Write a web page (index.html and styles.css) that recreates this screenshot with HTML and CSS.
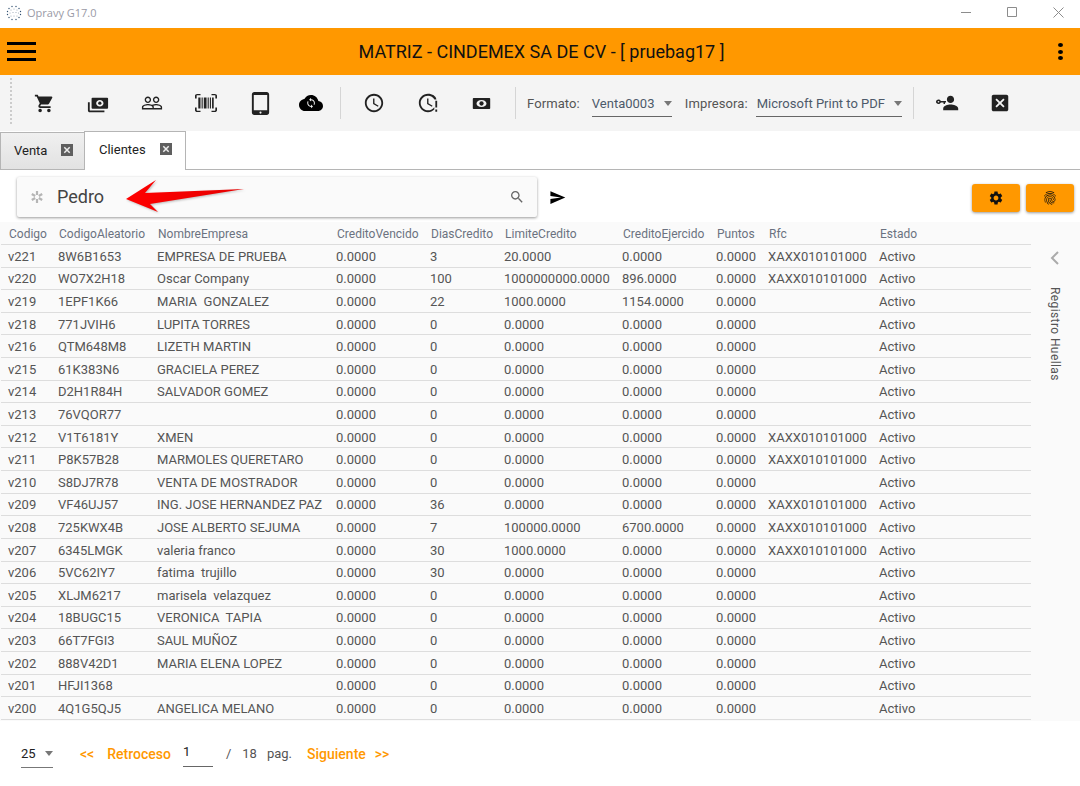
FILE: index.html
```html
<!DOCTYPE html>
<html lang="es">
<head>
<meta charset="utf-8">
<title>Opravy G17.0</title>
<link rel="stylesheet" href="styles.css">
</head>
<body>
<div class="app">
  <header class="titlebar">
    <svg class="logo" viewBox="0 0 16 16"><g class="logo-a"><circle cx="6" cy="1.500" r=".7"/><circle cx="10" cy="1.500" r=".7"/><circle cx="3" cy="3.500" r=".7"/><circle cx="13" cy="3.500" r=".7"/><circle cx="1.500" cy="6.500" r=".7"/><circle cx="14.500" cy="6.500" r=".7"/><circle cx="1.500" cy="9.500" r=".7"/><circle cx="14.500" cy="9.500" r=".7"/><circle cx="3" cy="12.500" r=".7"/><circle cx="13" cy="12.500" r=".7"/><circle cx="6" cy="14.500" r=".7"/><circle cx="10" cy="14.500" r=".7"/></g><g class="logo-b"><circle cx="5" cy="5" r=".6"/><circle cx="8" cy="4" r=".6"/><circle cx="11" cy="5" r=".6"/><circle cx="4" cy="8" r=".6"/><circle cx="7" cy="7.500" r=".6"/><circle cx="10" cy="7.500" r=".6"/><circle cx="12.500" cy="8" r=".6"/><circle cx="5" cy="11" r=".6"/><circle cx="8" cy="11" r=".6"/><circle cx="11" cy="11" r=".6"/></g></svg>
    <span class="app-name">Opravy G17.0</span>
    <div class="win-controls">
      <svg class="win-btn" viewBox="0 0 11 11"><path d="M0 5.500h10"/></svg>
      <svg class="win-btn" viewBox="0 0 11 11"><path d="M.5.5h9v9h-9z"/></svg>
      <svg class="win-btn" viewBox="0 0 11 11"><path d="M.5.5l10 10M10.500.5l-10 10"/></svg>
    </div>
  </header>

  <div class="appbar">
    <div class="burger"><span></span><span></span><span></span></div>
    <h1 class="appbar-title">MATRIZ - CINDEMEX SA DE CV - [ pruebag17 ]</h1>
    <div class="kebab"><span></span><span></span><span></span></div>
  </div>

  <div class="toolbar">
    <div class="grip"></div>
    <div class="tool tool-cart"><svg viewBox="0 0 24 24"><path d="M7 18c-1.100 0-1.990.9-1.990 2S5.900 22 7 22s2-.9 2-2-.9-2-2-2zM1 2v2h2l3.600 7.590-1.350 2.450c-.16.28-.25.61-.25.96 0 1.100.9 2 2 2h12v-2H7.420c-.14 0-.25-.11-.25-.25l.03-.12.9-1.630h7.450c.75 0 1.410-.41 1.750-1.030l3.580-6.490c.08-.14.12-.31.12-.48 0-.55-.45-1-1-1H5.210l-.94-2H1zm16 16c-1.100 0-1.990.9-1.990 2s.89 2 1.990 2 2-.9 2-2-.9-2-2-2z"/></svg></div>
    <div class="tool tool-money"><svg viewBox="0 0 24 24"><path fill-rule="evenodd" d="M6 4h16c.6 0 1 .4 1 1v10c0 .6-.4 1-1 1H6c-.6 0-1-.4-1-1V5c0-.6.4-1 1-1zm8 2.500c-2.200 0-4 1.600-4 3.500s1.800 3.500 4 3.500 4-1.600 4-3.500-1.800-3.500-4-3.500z"/><circle cx="14" cy="10" r="1.800"/><path d="M1 9h2v9h16v2H3c-1.100 0-2-.9-2-2z"/></svg></div>
    <div class="tool tool-people"><svg viewBox="0 0 24 24"><path d="M16.500 13c-1.200 0-3.070.34-4.500 1-1.430-.67-3.300-1-4.500-1C5.330 13 1 14.080 1 16.250V19h22v-2.750c0-2.170-4.330-3.250-6.500-3.250zm-4 4.500h-10v-1.250c0-.54 2.560-1.750 5-1.750s5 1.210 5 1.750v1.250zm9 0H14v-1.250c0-.46-.2-.86-.52-1.220.88-.3 1.960-.53 3.020-.53 2.440 0 5 1.210 5 1.750v1.250zM7.500 12c1.930 0 3.500-1.570 3.500-3.500S9.430 5 7.500 5 4 6.570 4 8.500 5.570 12 7.500 12zm0-5.500c1.100 0 2 .9 2 2s-.9 2-2 2-2-.9-2-2 .9-2 2-2zm9 5.500c1.930 0 3.500-1.570 3.500-3.500S18.430 5 16.500 5 13 6.570 13 8.500s1.570 3.500 3.500 3.500zm0-5.500c1.100 0 2 .9 2 2s-.9 2-2 2-2-.9-2-2 .9-2 2-2z"/></svg></div>
    <div class="tool tool-barcode"><svg viewBox="2 2 20 20" preserveAspectRatio="none"><path d="M2 7V4c0-1.100.9-2 2-2h3v1.500H4c-.3 0-.5.2-.5.5v3zM17 2h3c1.100 0 2 .9 2 2v3h-1.500V4c0-.3-.2-.5-.5-.5h-3zM2 17h1.500v3c0 .3.2.5.5.5h3V22H4c-1.100 0-2-.9-2-2zM20.500 17H22v3c0 1.100-.9 2-2 2h-3v-1.500h3c.3 0 .5-.2.5-.5z"/><path d="M5 6h2v12H5zM8 6h1v12H8zM10 6h2.500v12H10zM13.500 6h1v12h-1zM15.500 6h1v12h-1zM17.500 6H19v12h-1.500z"/></svg></div>
    <div class="tool tool-tablet"><svg viewBox="0 0 24 24"><path d="M18.500 0h-13C4.100 0 3 1.100 3 2.500v19C3 22.900 4.100 24 5.500 24h13c1.400 0 2.500-1.100 2.500-2.500v-19C21 1.100 19.900 0 18.500 0zM19 19H5V3h14z"/><circle class="ink-white" cx="12" cy="21.500" r="1.100"/></svg></div>
    <div class="tool tool-cloud"><svg viewBox="0 0 24 24"><path d="M19.350 10.040C18.670 6.590 15.640 4 12 4 9.110 4 6.600 5.640 5.350 8.040 2.340 8.360 0 10.910 0 14c0 3.310 2.690 6 6 6h13c2.760 0 5-2.240 5-5 0-2.640-2.050-4.780-4.650-4.960z"/><path class="ink-white" transform="translate(6.300 6.300) scale(.48)" d="M12 4V1L8 5l4 4V6c3.310 0 6 2.690 6 6 0 1.010-.25 1.970-.7 2.800l1.460 1.460C19.540 15.030 20 13.570 20 12c0-4.420-3.580-8-8-8zm0 14c-3.310 0-6-2.690-6-6 0-1.010.25-1.970.7-2.800L5.240 7.740C4.460 8.970 4 10.430 4 12c0 4.420 3.580 8 8 8v3l4-4-4-4v3z"/></svg></div>
    <div class="vsep sep-a"></div>
    <div class="tool tool-clock"><svg viewBox="0 0 24 24"><path d="M11.990 2C6.470 2 2 6.480 2 12s4.470 10 9.990 10C17.520 22 22 17.520 22 12S17.520 2 11.990 2zM12 20c-4.420 0-8-3.580-8-8s3.580-8 8-8 8 3.580 8 8-3.580 8-8 8zm.5-13H11v6l5.250 3.150.75-1.230-4.500-2.670z"/></svg></div>
    <div class="tool tool-clock"><svg viewBox="0 0 24 24"><path d="M11.990 2C6.470 2 2 6.480 2 12s4.470 10 9.990 10c2.700 0 5.100-1.050 6.900-2.800V16.500c-1.500 2.150-4 3.500-6.890 3.500-4.420 0-8-3.580-8-8s3.580-8 8-8c3 0 5.700 1.700 7 4.200h2.200C20.700 4.500 16.700 2 11.990 2z"/><path d="M12.500 7H11v6l5.250 3.150.75-1.230-4.500-2.670zM20 9.500h2V17h-2zM20 19h2v2.500h-2z"/></svg></div>
    <div class="tool tool-cash"><svg viewBox="0 0 24 24"><path fill-rule="evenodd" d="M2 5h20c.6 0 1 .4 1 1v12c0 .6-.4 1-1 1H2c-.6 0-1-.4-1-1V6c0-.6.4-1 1-1zm10 2.500C8.500 7.500 5.700 9.500 5.700 12s2.800 4.500 6.300 4.500 6.300-2 6.300-4.500-2.800-4.500-6.300-4.500z"/><circle cx="12" cy="12" r="2.700"/></svg></div>
    <div class="vsep sep-b"></div>
    <span class="field-label">Formato:</span>
    <div class="select select-formato"><span class="select-value">Venta0003</span><i class="caret"></i></div>
    <span class="field-label label-impresora">Impresora:</span>
    <div class="select select-impresora"><span class="select-value">Microsoft Print to PDF</span><i class="caret"></i></div>
    <div class="vsep sep-c"></div>
    <div class="tool tool-key"><svg viewBox="0 0 24 24"><path d="M15.500 12c2 0 3.600-1.600 3.600-3.600S17.500 4.800 15.500 4.800s-3.600 1.600-3.600 3.600 1.600 3.600 3.600 3.600zM15.500 13.600c-2.700 0-7.300 1.300-7.300 4v1.600h15v-1.600c0-2.700-5-4-7.700-4z"/><path fill-rule="evenodd" d="M3.500 8.500c1.100 0 2 .6 2.400 1.500h5.100v1.500H10V13H8.500v-1.500H5.900c-.4.900-1.300 1.500-2.400 1.500-1.400 0-2.500-1-2.500-2.250S2.100 8.500 3.500 8.500zm0 1.500c-.5 0-.9.300-.9.750s.4.750.9.750.9-.3.900-.75-.4-.75-.9-.75z"/></svg></div>
    <div class="tool tool-x"><svg viewBox="0 0 24 24"><path d="M19 3H5c-1.110 0-2 .9-2 2v14c0 1.100.89 2 2 2h14c1.110 0 2-.9 2-2V5c0-1.100-.89-2-2-2zm-2 12.590L15.590 17 12 13.410 8.410 17 7 15.590 10.590 12 7 8.410 8.410 7 12 10.590 15.590 7 17 8.410 13.410 12 17 15.590z"/></svg></div>
  </div>

  <nav class="tabs">
    <div class="tab tab-off"><span>Venta</span><svg class="tab-x" viewBox="0 0 12 12"><path class="tab-x-bg" d="M0 0h12v12H0z"/><path class="tab-x-fg" d="M3.300 3.300l5.400 5.400M8.700 3.300L3.300 8.700"/></svg></div>
    <div class="tab tab-on"><span>Clientes</span><svg class="tab-x" viewBox="0 0 12 12"><path class="tab-x-bg" d="M0 0h12v12H0z"/><path class="tab-x-fg" d="M3.300 3.300l5.400 5.400M8.700 3.300L3.300 8.700"/></svg></div>
  </nav>

  <div class="searchrow">
    <div class="searchbox">
      <svg class="spinner" viewBox="0 0 14 14"><path d="M7 1v4M7 9v4M1.800 4l3.400 2M8.800 8l3.400 2M1.800 10l3.400-2M8.800 6l3.400-2"/></svg>
      <span class="search-text">Pedro</span>
      <svg class="search-icon" viewBox="0 0 24 24"><path d="M15.500 14h-.79l-.28-.27C15.410 12.590 16 11.110 16 9.500 16 5.910 13.090 3 9.500 3S3 5.910 3 9.500 5.910 16 9.500 16c1.610 0 3.090-.59 4.230-1.570l.27.28v.79l5 4.990L20.490 19l-4.990-5zm-6 0C7.010 14 5 11.990 5 9.500S7.010 5 9.500 5 14 7.010 14 9.500 11.990 14 9.500 14z"/></svg>
    </div>
    <svg class="send" viewBox="0 0 24 24"><path d="M2.010 21L23 12 2.010 3 2 10l15 2-15 2z"/></svg>
    <div class="search-actions">
      <div class="orange-btn"><svg viewBox="0 0 24 24"><path d="M19.140 12.940c.04-.3.06-.61.06-.94 0-.32-.02-.64-.07-.94l2.030-1.580c.18-.14.23-.41.12-.61l-1.920-3.320c-.12-.22-.37-.29-.59-.22l-2.390.96c-.5-.38-1.030-.7-1.620-.94l-.36-2.540c-.04-.24-.24-.41-.48-.41h-3.840c-.24 0-.43.17-.47.41l-.36 2.540c-.59.24-1.130.57-1.620.94l-2.390-.96c-.22-.08-.47 0-.59.22L2.740 8.870c-.12.21-.08.47.12.61l2.030 1.580c-.05.3-.09.63-.09.94s.02.64.07.94l-2.030 1.580c-.18.14-.23.41-.12.61l1.920 3.320c.12.22.37.29.59.22l2.390-.96c.5.38 1.030.7 1.620.94l.36 2.540c.05.24.24.41.48.41h3.840c.24 0 .44-.17.47-.41l.36-2.540c.59-.24 1.130-.56 1.620-.94l2.390.96c.22.08.47 0 .59-.22l1.920-3.320c.12-.22.07-.47-.12-.61l-2.010-1.580zM12 15.600c-1.980 0-3.600-1.620-3.600-3.600s1.620-3.600 3.600-3.600 3.600 1.620 3.600 3.600-1.620 3.600-3.600 3.600z"/></svg></div>
      <div class="orange-btn"><svg viewBox="0 0 24 24"><path d="M17.810 4.470c-.08 0-.16-.02-.23-.06C15.660 3.420 14 3 12.010 3c-1.980 0-3.860.47-5.570 1.410-.24.13-.54.04-.68-.2-.13-.24-.04-.55.2-.68C7.820 2.520 9.860 2 12.010 2c2.130 0 3.990.47 6.030 1.520.25.13.34.43.21.67-.09.18-.26.28-.44.28zM3.500 9.720c-.1 0-.2-.03-.29-.09-.23-.16-.28-.47-.12-.7.99-1.400 2.250-2.500 3.750-3.270C9.980 4.040 14 4.030 17.150 5.650c1.500.77 2.760 1.860 3.750 3.250.16.22.11.54-.12.7-.23.16-.54.11-.7-.12-.9-1.260-2.040-2.250-3.390-2.940-2.870-1.470-6.540-1.470-9.400.01-1.360.7-2.500 1.700-3.400 2.960-.08.14-.23.21-.39.21zm6.250 12.070c-.13 0-.26-.05-.35-.15-.87-.87-1.340-1.430-2.010-2.640-.69-1.230-1.050-2.730-1.050-4.340 0-2.970 2.540-5.390 5.660-5.390s5.660 2.420 5.660 5.390c0 .28-.22.5-.5.5s-.5-.22-.5-.5c0-2.420-2.090-4.390-4.660-4.390-2.570 0-4.660 1.970-4.660 4.390 0 1.440.32 2.770.93 3.850.64 1.150 1.080 1.640 1.850 2.420.19.2.19.51 0 .71-.11.1-.24.15-.37.15zm7.170-1.850c-1.190 0-2.240-.3-3.100-.89-1.490-1.010-2.380-2.650-2.380-4.390 0-.28.22-.5.5-.5s.5.22.5.5c0 1.410.72 2.740 1.940 3.560.71.48 1.540.71 2.540.71.24 0 .64-.03 1.040-.1.27-.05.53.13.58.41.05.27-.13.53-.41.58-.57.11-1.070.12-1.210.12zM14.910 22c-.04 0-.09-.01-.13-.02-1.590-.44-2.630-1.030-3.720-2.100-1.400-1.390-2.170-3.240-2.170-5.220 0-1.620 1.380-2.940 3.080-2.940 1.700 0 3.080 1.320 3.080 2.940 0 1.070.93 1.940 2.080 1.940s2.080-.87 2.080-1.940c0-3.770-3.250-6.830-7.250-6.830-2.840 0-5.440 1.580-6.610 4.030-.39.81-.59 1.760-.59 2.800 0 .78.07 2.010.67 3.610.1.26-.03.55-.29.64-.26.1-.55-.04-.64-.29-.49-1.310-.73-2.610-.73-3.960 0-1.200.23-2.290.68-3.240 1.330-2.790 4.280-4.600 7.510-4.600 4.550 0 8.250 3.510 8.250 7.830 0 1.620-1.380 2.940-3.080 2.940s-3.080-1.320-3.080-2.940c0-1.070-.93-1.940-2.080-1.940s-2.080.87-2.080 1.940c0 1.710.66 3.310 1.870 4.510.95.94 1.860 1.460 3.270 1.850.27.07.42.35.35.61-.05.23-.26.38-.47.38z"/></svg></div>
    </div>
    <svg class="red-arrow" viewBox="0 0 130 36"><defs><linearGradient id="arrowfill" x1="0" y1="0" x2="1" y2="0"><stop offset="0" stop-color="#f00"/><stop offset="1" stop-color="#e60000"/></linearGradient></defs><polygon fill="url(#arrowfill)" points="2,19 32,0 21,13 120,9 26,24 34,32"/></svg>
  </div>

  <div class="content">
    <table class="grid">
      <colgroup><col class="c1"><col class="c2"><col class="c3"><col class="c4"><col class="c5"><col class="c6"><col class="c7"><col class="c8"><col class="c9"><col></colgroup>
      <thead><tr><th>Codigo</th><th>CodigoAleatorio</th><th>NombreEmpresa</th><th>CreditoVencido</th><th>DiasCredito</th><th>LimiteCredito</th><th>CreditoEjercido</th><th>Puntos</th><th>Rfc</th><th>Estado</th></tr></thead>
      <tbody>
        <tr><td>v221</td><td>8W6B1653</td><td>EMPRESA DE PRUEBA</td><td>0.0000</td><td>3</td><td>20.0000</td><td>0.0000</td><td>0.0000</td><td>XAXX010101000</td><td>Activo</td></tr>
        <tr><td>v220</td><td>WO7X2H18</td><td>Oscar Company</td><td>0.0000</td><td>100</td><td>1000000000.0000</td><td>896.0000</td><td>0.0000</td><td>XAXX010101000</td><td>Activo</td></tr>
        <tr><td>v219</td><td>1EPF1K66</td><td>MARIA&nbsp; GONZALEZ</td><td>0.0000</td><td>22</td><td>1000.0000</td><td>1154.0000</td><td>0.0000</td><td></td><td>Activo</td></tr>
        <tr><td>v218</td><td>771JVIH6</td><td>LUPITA TORRES</td><td>0.0000</td><td>0</td><td>0.0000</td><td>0.0000</td><td>0.0000</td><td></td><td>Activo</td></tr>
        <tr><td>v216</td><td>QTM648M8</td><td>LIZETH MARTIN</td><td>0.0000</td><td>0</td><td>0.0000</td><td>0.0000</td><td>0.0000</td><td></td><td>Activo</td></tr>
        <tr><td>v215</td><td>61K383N6</td><td>GRACIELA PEREZ</td><td>0.0000</td><td>0</td><td>0.0000</td><td>0.0000</td><td>0.0000</td><td></td><td>Activo</td></tr>
        <tr><td>v214</td><td>D2H1R84H</td><td>SALVADOR GOMEZ</td><td>0.0000</td><td>0</td><td>0.0000</td><td>0.0000</td><td>0.0000</td><td></td><td>Activo</td></tr>
        <tr><td>v213</td><td>76VQOR77</td><td></td><td>0.0000</td><td>0</td><td>0.0000</td><td>0.0000</td><td>0.0000</td><td></td><td>Activo</td></tr>
        <tr><td>v212</td><td>V1T6181Y</td><td>XMEN</td><td>0.0000</td><td>0</td><td>0.0000</td><td>0.0000</td><td>0.0000</td><td>XAXX010101000</td><td>Activo</td></tr>
        <tr><td>v211</td><td>P8K57B28</td><td>MARMOLES QUERETARO</td><td>0.0000</td><td>0</td><td>0.0000</td><td>0.0000</td><td>0.0000</td><td>XAXX010101000</td><td>Activo</td></tr>
        <tr><td>v210</td><td>S8DJ7R78</td><td>VENTA DE MOSTRADOR</td><td>0.0000</td><td>0</td><td>0.0000</td><td>0.0000</td><td>0.0000</td><td></td><td>Activo</td></tr>
        <tr><td>v209</td><td>VF46UJ57</td><td>ING. JOSE HERNANDEZ PAZ</td><td>0.0000</td><td>36</td><td>0.0000</td><td>0.0000</td><td>0.0000</td><td>XAXX010101000</td><td>Activo</td></tr>
        <tr><td>v208</td><td>725KWX4B</td><td>JOSE ALBERTO SEJUMA</td><td>0.0000</td><td>7</td><td>100000.0000</td><td>6700.0000</td><td>0.0000</td><td>XAXX010101000</td><td>Activo</td></tr>
        <tr><td>v207</td><td>6345LMGK</td><td>valeria franco</td><td>0.0000</td><td>30</td><td>1000.0000</td><td>0.0000</td><td>0.0000</td><td>XAXX010101000</td><td>Activo</td></tr>
        <tr><td>v206</td><td>5VC62IY7</td><td>fatima&nbsp; trujillo</td><td>0.0000</td><td>30</td><td>0.0000</td><td>0.0000</td><td>0.0000</td><td></td><td>Activo</td></tr>
        <tr><td>v205</td><td>XLJM6217</td><td>marisela&nbsp; velazquez</td><td>0.0000</td><td>0</td><td>0.0000</td><td>0.0000</td><td>0.0000</td><td></td><td>Activo</td></tr>
        <tr><td>v204</td><td>18BUGC15</td><td>VERONICA&nbsp; TAPIA</td><td>0.0000</td><td>0</td><td>0.0000</td><td>0.0000</td><td>0.0000</td><td></td><td>Activo</td></tr>
        <tr><td>v203</td><td>66T7FGI3</td><td>SAUL MUÑOZ</td><td>0.0000</td><td>0</td><td>0.0000</td><td>0.0000</td><td>0.0000</td><td></td><td>Activo</td></tr>
        <tr><td>v202</td><td>888V42D1</td><td>MARIA ELENA LOPEZ</td><td>0.0000</td><td>0</td><td>0.0000</td><td>0.0000</td><td>0.0000</td><td></td><td>Activo</td></tr>
        <tr><td>v201</td><td>HFJI1368</td><td></td><td>0.0000</td><td>0</td><td>0.0000</td><td>0.0000</td><td>0.0000</td><td></td><td>Activo</td></tr>
        <tr><td>v200</td><td>4Q1G5QJ5</td><td>ANGELICA MELANO</td><td>0.0000</td><td>0</td><td>0.0000</td><td>0.0000</td><td>0.0000</td><td></td><td>Activo</td></tr>
      </tbody>
    </table>
    <aside class="sidepanel">
      <svg class="chevron" viewBox="0 0 12 16"><path d="M9 2L3 8l6 6"/></svg>
      <span class="side-text">Registro Huellas</span>
    </aside>
  </div>

  <footer class="pager">
    <div class="page-size"><span>25</span><i class="caret"></i></div>
    <span class="pg-link pg-prev-arrows">&lt;&lt;</span>
    <span class="pg-link pg-prev">Retroceso</span>
    <div class="pg-input">1</div>
    <span class="pg-text pg-slash">/</span>
    <span class="pg-text pg-total">18</span>
    <span class="pg-text pg-unit">pag.</span>
    <span class="pg-link pg-next">Siguiente</span>
    <span class="pg-link pg-next-arrows">&gt;&gt;</span>
  </footer>
</div>
</body>
</html>
```
FILE: styles.css
```css
* { box-sizing: border-box; }
html, body { margin: 0; padding: 0; }
body { width: 1080px; height: 786px; overflow: hidden; background: #fff; font-family: Roboto, "Liberation Sans", sans-serif; }
.app { display: flex; flex-direction: column; width: 1080px; height: 786px; }

/* title bar */
.titlebar { height: 28px; flex: none; display: flex; align-items: center; padding: 0 0 3px 6px; background: #fff; }
.logo { width: 16px; height: 16px; margin-right: 5px; }
.logo-a { fill: #2f4f70; }
.logo-b { fill: #9aa8b5; }
.app-name { font: 11px "Open Sans", sans-serif; color: #9a9aa6; }
.win-controls { margin-left: auto; display: flex; padding-right: 16px; gap: 35px; }
.win-btn { width: 11px; height: 11px; fill: none; stroke: #8c8c8c; stroke-width: 1; overflow: visible; }

/* app bar */
.appbar { height: 47px; flex: none; background: #ff9800; display: flex; align-items: center; padding: 0 17px 0 7px; }
.burger { width: 29px; display: flex; flex-direction: column; gap: 5px; }
.burger span { display: block; height: 3px; background: #000; }
.appbar-title { flex: 1; margin: 0 0 0 -11px; text-align: center; font: 400 18px Roboto, sans-serif; color: #111; }
.kebab { width: 5px; display: flex; flex-direction: column; gap: 2.500px; }
.kebab span { width: 5px; height: 4px; border-radius: 50%; background: #000; }

/* toolbar */
.toolbar { height: 56px; flex: none; background: #f4f4f4; display: flex; align-items: center; padding-left: 10px; }
.grip { width: 2px; height: 46px; border-left: 2px dotted #ccc; margin-right: 5px; margin-top: -4px; }
.tool { width: 54px; display: flex; justify-content: center; align-items: center; }
.tool svg { width: 24px; height: 24px; fill: #222; }
.tool-cart svg { width: 21px; height: 21px; }
.tool-money svg { width: 22px; height: 22px; margin-top: 3px; }
.tool-people svg { width: 22px; height: 22px; }
.tool-barcode svg { width: 22px; height: 18px; }
.tool-tablet svg { width: 23px; height: 23px; }
.tool-cloud { width: 48px; }
.tool-cloud svg { fill: #000; }
.ink-white { fill: #f4f4f4; }
.vsep { width: 1px; height: 32px; background: #d5d5d5; flex: none; }
.sep-a { margin: 0 6px 0 5px; }
.tool-clock svg { width: 22px; height: 22px; }
.tool-cash { width: 53px; }
.tool-cash svg { width: 19px; height: 19px; }
.sep-b { margin-left: 7px; }
.field-label { font-size: 13px; color: #555; margin-left: 11px; letter-spacing: .1px; }
.label-impresora { margin-left: 13px; }
.select { display: flex; align-items: center; height: 26px; margin-top: 1px; margin-left: 12px; border-bottom: 1px solid #666; font-size: 13px; color: #4d5a6a; padding-top: 1px; }
.select-formato { width: 80px; }
.select-impresora { width: 146px; margin-left: 8px; padding-left: 1px; }
.select-value { flex: 1; }
.caret { width: 0; height: 0; border-left: 4.500px solid transparent; border-right: 4.500px solid transparent; border-top: 5px solid #777; }
.sep-c { margin-left: 11px; }
.tool-key { width: 66px; }
.tool-x { width: 40px; }
.tool-x svg { width: 22px; height: 22px; }

/* tabs */
.tabs { height: 39px; flex: none; display: flex; align-items: flex-end; background: #fff; border-bottom: 1px solid #b5b5b5; }
.tab { display: flex; align-items: center; font-size: 13px; color: #222; }
.tab-off { width: 84px; height: 37px; padding: 0 11px 2px 13px; justify-content: space-between; background: linear-gradient(#f0f0f0, #e2e2e2); border: 1px solid #b5b5b5; border-bottom: none; border-right: none; }
.tab-on { width: 102px; height: 39px; margin-bottom: -1px; padding: 0 13px 4px 14px; justify-content: space-between; background: #fff; border: 1px solid #b5b5b5; border-bottom: none; }
.tab-x { width: 12px; height: 12px; }
.tab-x-bg { fill: #5f5f5f; }
.tab-x-fg { fill: none; stroke: #eee; stroke-width: 1.500; }

/* search row */
.searchrow { height: 52px; flex: none; display: flex; align-items: center; padding-left: 17px; position: relative; }
.searchbox { width: 520px; height: 40px; margin-top: 2px; display: flex; align-items: center; background: #fafafa; border-radius: 2px; box-shadow: 0 1px 3px rgba(0,0,0,.4); padding: 0 12px 0 13px; }
.spinner { width: 14px; height: 14px; fill: none; stroke: #b5b5b5; stroke-width: 2.200; margin-right: 13px; }
.search-text { flex: 1; font-size: 18px; color: #444; padding-bottom: 2px; }
.search-icon { width: 16px; height: 16px; fill: #666; }
.send { width: 17px; height: 17px; fill: #000; margin: 3px 0 0 12px; }
.search-actions { margin-left: auto; display: flex; gap: 6px; padding-right: 6px; margin-top: 4px; }
.orange-btn { width: 48px; height: 28px; background: #ff9800; border-radius: 3px; box-shadow: 0 1px 3px rgba(0,0,0,.4); display: flex; align-items: center; justify-content: center; }
.orange-btn svg { width: 16px; height: 16px; fill: #111; }
.red-arrow { position: absolute; left: 124px; top: 10px; width: 130px; height: 36px; filter: drop-shadow(1px 1px 1px rgba(0,0,0,.25)); }

/* table */
.content { height: 499px; flex: none; display: flex; background: #fafafa; padding-left: 1px; }
.grid { width: 1030px; border-collapse: separate; border-spacing: 0; table-layout: fixed; font-size: 13px; color: #555; flex: none; height: 498px; }
.c1 { width: 50px; } .c2 { width: 99px; } .c3 { width: 179px; } .c4 { width: 94px; } .c5 { width: 74px; }
.c6 { width: 118px; } .c7 { width: 94px; } .c8 { width: 52px; } .c9 { width: 111px; }
.grid th { font-weight: 400; font-size: 12px; color: #6b7280; text-align: left; padding: 1px 0 0 8px; height: 23px; border-bottom: 1px solid #ddd; white-space: nowrap; }
.grid td { padding: .8px 0 0 7px; height: 22.620px; border-bottom: 1px solid #ddd; white-space: nowrap; }
.sidepanel { flex: 1; display: flex; flex-direction: column; align-items: center; padding: 28px 2px 0 0; }
.chevron { width: 12px; height: 16px; fill: none; stroke: #aaa; stroke-width: 2; }
.side-text { writing-mode: vertical-rl; font-size: 12px; color: #555; margin-top: 21px; letter-spacing: .4px; }

/* pager */
.pager { flex: 1; display: flex; align-items: center; padding: 0 0 0 21px; font-size: 13px; color: #555; }
.page-size { width: 32px; height: 25px; display: flex; align-items: center; justify-content: space-between; border-bottom: 1px solid #777; color: #222; padding-bottom: 4px; margin-top: 4px; }
.pg-link { color: #ff9800; font-weight: 500; font-size: 14px; }
.pg-prev-arrows { margin-left: 27px; }
.pg-prev { margin-left: 13px; }
.pg-input { width: 30px; height: 25px; margin-left: 12px; border-bottom: 1px solid #666; color: #222; margin-top: 2px; padding-top: 2px; }
.pg-slash { margin-left: 13px; }
.pg-total { margin-left: 11px; }
.pg-unit { margin-left: 10px; }
.pg-next { margin-left: 15px; }
.pg-next-arrows { margin-left: 9px; }
```
